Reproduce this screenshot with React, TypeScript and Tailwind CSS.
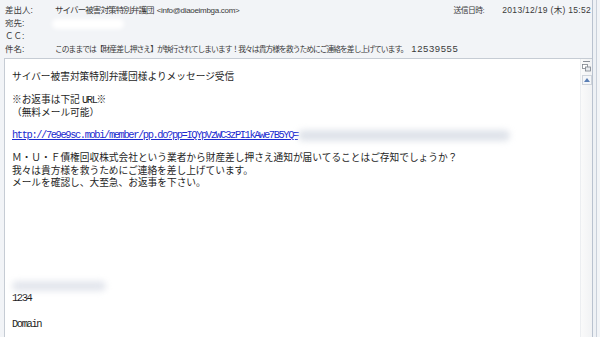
import React from "react";

// en-tête du message (police proportionnelle)
const headFont = { fontFamily: '"Liberation Sans", "Noto Sans CJK JP", sans-serif' };
// corps du message (police à chasse fixe)
const bodyFont = { fontFamily: '"Noto Sans CJK JP", "Liberation Mono", monospace' };

const Mono = ({ children }: { children: React.ReactNode }) => (
  <span
    className="text-[10.4px] leading-[11.5px] tracking-[-1.39px]"
    style={{ fontFamily: '"Liberation Mono", monospace' }}
  >
    {children}
  </span>
);

const HeaderRow = ({ label, children, right }: { label: string; children?: React.ReactNode; right?: React.ReactNode }) => (
  <div className="flex h-[13px] items-center">
    <div className="w-[50px] shrink-0">{label}</div>
    <div className="flex-1 flex items-center">{children}</div>
    {right}
  </div>
);

const Blank = ({ h = "h-[11.5px]" }: { h?: string }) => <div className={h} />;

const App: React.FC = () => {
  return (
    <div className="w-[600px] h-[337px] overflow-hidden bg-[#f2f4f7] flex">
      <div className="w-[592px] flex flex-col">
        {/* En-tête */}
        <div className="h-[58px] pt-[4px] pl-[5px] pr-[1px] text-[8.5px] text-[#3a3a3a]" style={headFont}>
          <HeaderRow
            label="差出人:"
            right={
              <div className="flex items-center">
                <span className="mr-[18px] text-[7.8px] tracking-[-0.5px]">送信日時:</span>
                <span className="tracking-[0.3px]">2013/12/19 (木) 15:52</span>
              </div>
            }
          >
            <span className="tracking-[-0.9px]">サイバー被害対策特別弁護団</span>
            <span className="ml-[3px] text-[8px] tracking-[-0.3px]">&lt;info@diaoeimbga.com&gt;</span>
          </HeaderRow>
          <HeaderRow label="宛先:">
            <span className="inline-block w-[72px] h-[10px] -ml-[3px] rounded-full bg-white blur-[2px]" />
          </HeaderRow>
          <HeaderRow label=" ＣＣ:" />
          <HeaderRow label="件名:">
            <span className="text-[7.8px] tracking-[-1px]">
              このままでは【財産差し押さえ】が執行されてしまいます！我々は貴方様を救うためにご連絡を差し上げています。
            </span>
            <span className="ml-[4px] text-[9.5px] tracking-[0.6px]">12539555</span>
          </HeaderRow>
        </div>

        {/* Corps */}
        <div className="ml-[4px] flex flex-1 min-h-0 border-l border-t border-[#c6ccd4] bg-white">
          <div
            className="flex-1 pt-[12px] pl-[7px] text-[9.7px] leading-[11.5px] text-[#1e1e1e] overflow-hidden whitespace-nowrap"
            style={bodyFont}
          >
            <div>サイバー被害対策特別弁護団様よりメッセージ受信</div>
            <Blank />
            <div>
              ※お返事は下記 <Mono>URL</Mono>※
            </div>
            <div>（無料メール可能）</div>
            <Blank />
            <div className="flex items-center h-[11.5px]">
              <span className="text-[#1c2bd0] underline">
                <Mono>http://7e9e9sc.mobi/member/pp.do?pp=IQYpVzWC3zPI1kAwe7B5YQ=</Mono>
              </span>
              <span className="inline-block w-[212px] h-[11px] rounded-full bg-[#dfe3ea] blur-[3px]" />
            </div>
            <Blank h="h-[10px]" />
            <div className="leading-[12.5px]">
              <div>Ｍ・Ｕ・Ｆ債権回収株式会社という業者から財産差し押さえ通知が届いてることはご存知でしょうか？</div>
              <div>我々は貴方様を救うためにご連絡を差し上げています。</div>
              <div>メールを確認し、大至急、お返事を下さい。</div>
            </div>
            <Blank />
            <Blank />
            <Blank />
            <Blank />
            <Blank />
            <Blank />
            <Blank />
            <Blank h="h-[10px]" />
            <div className="flex items-center h-[13px]">
              <span className="inline-block w-[94px] h-[10px] rounded-full bg-[#e3e6ed] blur-[3px]" />
            </div>
            <div>
              <Mono>1234</Mono>
            </div>
            <Blank h="h-[13px]" />
            <div>
              <Mono>Domain</Mono>
            </div>
          </div>

          {/* Barre de défilement */}
          <div className="w-[12px] bg-gradient-to-r from-[#fafafa] to-[#f1f2f4] border-l border-[#eceef1] flex flex-col items-center pt-[2px]">
            <div className="w-[7px] h-[1px] bg-[#8a8f98]" />
            <svg width="9" height="8" viewBox="0 0 9 8" className="mt-[2px]">
              <rect x="0.5" y="0.5" width="5" height="4" fill="#fff" stroke="#7d838c" strokeWidth="0.8" />
              <rect x="3.5" y="3" width="5" height="4" fill="#e8ebef" stroke="#7d838c" strokeWidth="0.8" />
            </svg>
            <div className="mt-[3px] w-[10px] h-[10px] border border-[#cfd4db] bg-[#f4f6f9] flex items-center justify-center">
              <svg width="6" height="4" viewBox="0 0 6 4">
                <path d="M0 4 L3 0 L6 4 Z" fill="#5b7fb5" />
              </svg>
            </div>
          </div>
        </div>
      </div>

      {/* Bord droit */}
      <div className="w-[8px] flex">
        <div className="w-[1px] bg-[#b9c2cf]" />
        <div className="w-[3px] bg-[#eef1f5]" />
        <div className="w-[1px] bg-[#c9d0da]" />
        <div className="flex-1 bg-[#f2f4f7]" />
      </div>
    </div>
  );
};

export default App;
